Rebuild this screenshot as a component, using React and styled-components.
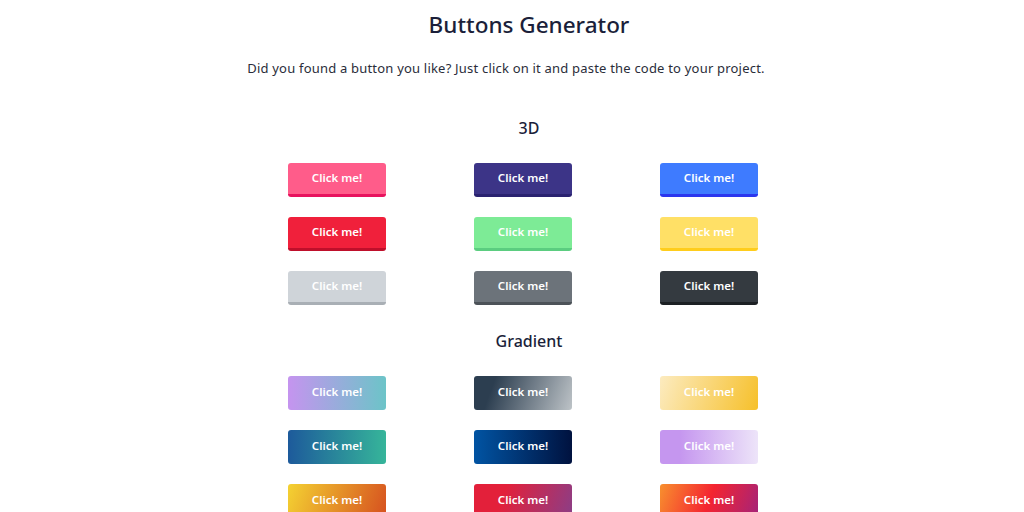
import React from 'react';
import styled, { createGlobalStyle, css } from 'styled-components';

const GlobalStyle = createGlobalStyle`
	html, body {
		margin: 0;
		padding: 0;
		background: #ffffff;
		font-family: 'Open Sans', 'Noto Sans', sans-serif;
		overflow: hidden;
	}
`;

const Page = styled.div`
	width: 1024px;
	height: 512px;
	display: flex;
	flex-direction: column;
	align-items: center;
	padding-top: 9px;
	box-sizing: border-box;
`;

const Title = styled.h1`
	margin: 0 0 0 34px;
	font-family: 'Noto Sans', sans-serif;
	font-size: 22.5px;
	font-weight: 500;
	color: #1b1f3a;
	line-height: 32px;
`;

const Subtitle = styled.p`
	margin: 18px 12px 0 0;
	font-family: 'Noto Sans', sans-serif;
	font-size: 13px;
	color: #2a2d3a;
	letter-spacing: 0.2px;
	line-height: 18px;
`;

const SectionTitle = styled.h2`
	margin: ${(p) => p.top}px 0 0 34px;
	font-family: 'Noto Sans', sans-serif;
	font-size: 16px;
	font-weight: 500;
	color: #1b1f3a;
	line-height: 22px;
`;

const Grid = styled.div`
	margin: 24px 0 0 22px;
	display: grid;
	grid-template-columns: repeat(3, 186px);
	row-gap: 20px;
	justify-items: center;
`;

const Button = styled.button`
	width: 98px;
	height: 34px;
	border: 0;
	border-radius: 3px;
	padding: 0;
	font-family: 'Noto Sans', sans-serif;
	font-size: 11.5px;
	font-weight: 600;
	color: #ffffff;
	cursor: pointer;
	${(p) =>
		p.shade &&
		css`
			background: ${p.bg};
			border-bottom: 3px solid ${p.shade};
			padding-bottom: 2px;
		`}
	${(p) =>
		p.gradient &&
		css`
			background: ${p.gradient};
			padding-bottom: 3px;
		`}
`;

const threeD = [
	['#ff5c8a', '#e8125e'],
	['#3c3487', '#2a2270'],
	['#3e7bff', '#2b36ee'],
	['#f0203b', '#bf0f2b'],
	['#7deb96', '#5bcd80'],
	['#ffe066', '#ffcd1c'],
	['#cfd4d9', '#a9afb5'],
	['#6c737a', '#4c5258'],
	['#343a40', '#1c2024'],
];

const gradients = [
	'linear-gradient(90deg, #c594ef, #6cc4c8)',
	'linear-gradient(110deg, #2c3e50 20%, #bdc3c7)',
	'linear-gradient(110deg, #fcebc0, #f6c02a)',
	'linear-gradient(90deg, #1d5a9b, #36b59a)',
	'linear-gradient(90deg, #0154a3, #00123f)',
	'linear-gradient(90deg, #c596ef 20%, #ede4f9)',
	'linear-gradient(110deg, #f4d232, #d6501f)',
	'linear-gradient(110deg, #e3203a 30%, #8b3e87)',
	'linear-gradient(110deg, #f8902e, #f42430 50%, #a4237a)',
];

export default function App() {
	return (
		<>
			<GlobalStyle />
			<Page>
				<Title>Buttons Generator</Title>
				<Subtitle>Did you found a button you like? Just click on it and paste the code to your project.</Subtitle>
				<SectionTitle top={40}>3D</SectionTitle>
				<Grid>
					{threeD.map(([bg, shade], i) => (
						<Button key={i} bg={bg} shade={shade}>
							Click me!
						</Button>
					))}
				</Grid>
				<SectionTitle top={25}>Gradient</SectionTitle>
				<Grid>
					{gradients.map((g, i) => (
						<Button key={i} gradient={g}>
							Click me!
						</Button>
					))}
				</Grid>
			</Page>
		</>
	);
}
